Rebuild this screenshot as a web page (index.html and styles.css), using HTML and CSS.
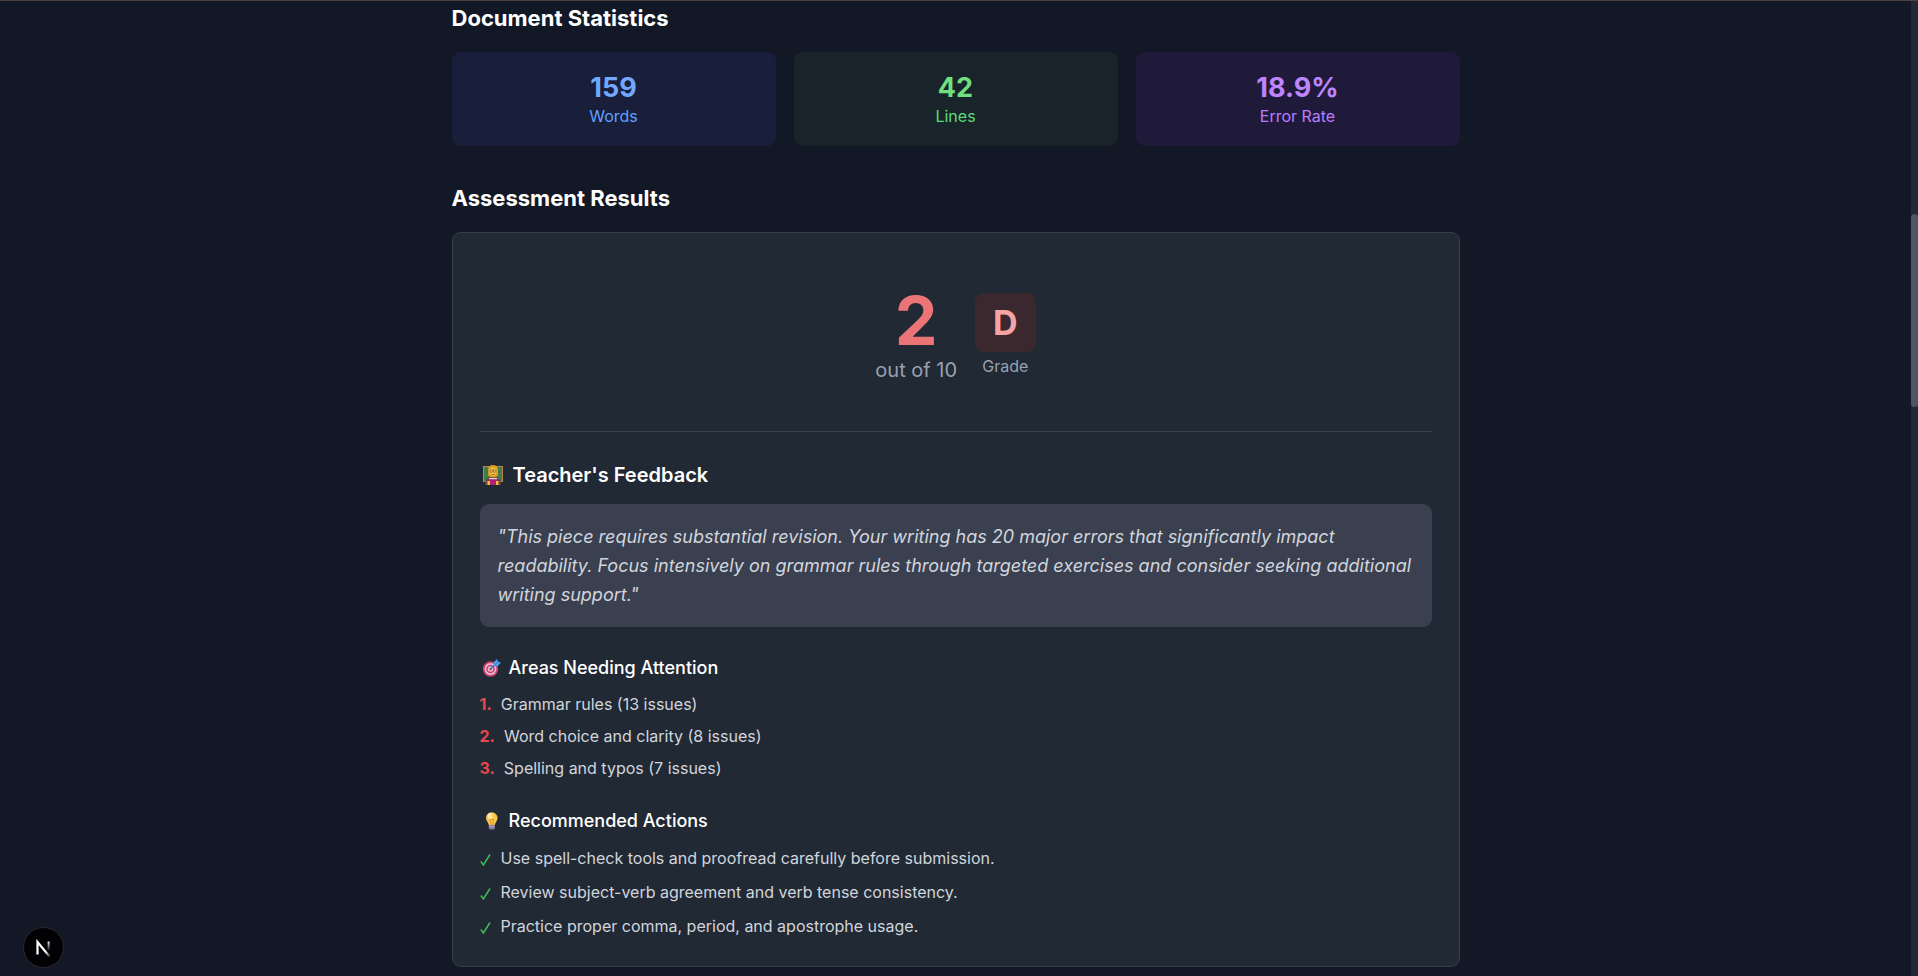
FILE: index.html
```html
<!DOCTYPE html>
<html lang="en">
<head>
<meta charset="utf-8">
<meta name="viewport" content="width=device-width, initial-scale=1">
<title>Assessment Results</title>
<link rel="stylesheet" href="styles.css">
</head>
<body>
<div class="page">
  <main class="content">
    <section class="section">
      <h2 class="section-title">Document Statistics</h2>
      <div class="stats">
        <div class="stat stat-blue"><div class="stat-value">159</div><div class="stat-label">Words</div></div>
        <div class="stat stat-green"><div class="stat-value">42</div><div class="stat-label">Lines</div></div>
        <div class="stat stat-purple"><div class="stat-value">18.9%</div><div class="stat-label">Error Rate</div></div>
      </div>
    </section>

    <section class="section">
      <h2 class="section-title">Assessment Results</h2>
      <div class="card">
        <div class="score-row">
          <div class="score">
            <div class="score-value">2</div>
            <div class="score-total">out of 10</div>
          </div>
          <div class="grade">
            <div class="grade-badge">D</div>
            <div class="grade-label">Grade</div>
          </div>
        </div>

        <div class="feedback">
          <h3 class="feedback-title">
            <svg class="emoji emoji-large" viewBox="0 0 26 24" aria-hidden="true">
              <rect x="3" y="3" width="20" height="16" fill="#b98555"/>
              <rect x="4" y="4" width="18" height="14" fill="#3f7d4c"/>
              <path d="M5 22q0-7 5-8h6q5 1 5 8z" fill="#70404a"/>
              <path d="M8 12.500V7q0-5 5-5t5 5v5.500q-2 2-5 2t-5-2z" fill="#d99a22"/>
              <ellipse cx="13" cy="8.500" rx="3.600" ry="4.200" fill="#f2bd3a"/>
              <circle cx="11.400" cy="8" r="1.400" fill="none" stroke="#8f6c48" stroke-width=".8"/>
              <circle cx="14.600" cy="8" r="1.400" fill="none" stroke="#8f6c48" stroke-width=".8"/>
              <path d="M11.500 11.200q1.500 1 3 0" fill="none" stroke="#a5622a" stroke-width=".8"/>
              <rect x="9" y="15" width="8" height="1.500" fill="#dfd3dc"/>
              <rect x="9" y="16.500" width="8" height="5" fill="#b51d72"/>
              <path d="M7.500 18H10v4H7.500zM16 18h2.500v4H16z" fill="#f4c03a"/>
            </svg>
            Teacher's Feedback
          </h3>
          <blockquote class="quote">"This piece requires substantial revision. Your writing has 20 major errors that significantly impact readability. Focus intensively on grammar rules through targeted exercises and consider seeking additional writing support."</blockquote>
        </div>

        <div class="group">
          <h4 class="group-title">
            <svg class="emoji" viewBox="0 0 23 24" aria-hidden="true">
              <circle cx="10.500" cy="13" r="7.700" fill="#d33b68"/>
              <circle cx="10.500" cy="13" r="5.900" fill="#e3c3d6"/>
              <circle cx="10.500" cy="13" r="4.300" fill="#d33b68"/>
              <circle cx="10.500" cy="13" r="2.700" fill="#e3c3d6"/>
              <circle cx="10.500" cy="13" r="1.300" fill="#d33b68"/>
              <path d="M10.500 13l5-5" stroke="#2f71b8" stroke-width="1.200"/>
              <path d="M13.500 6.500l3.500-3.500 1 2.700 3 .8-3.500 3.700-3.200.3z" fill="#4da0ed"/>
              <path d="M14.500 9.500l4-4" stroke="#2f78c5" stroke-width=".8"/>
            </svg>
            Areas Needing Attention
          </h4>
          <ol class="list">
            <li class="item"><span class="number">1.</span>Grammar rules (13 issues)</li>
            <li class="item"><span class="number">2.</span>Word choice and clarity (8 issues)</li>
            <li class="item"><span class="number">3.</span>Spelling and typos (7 issues)</li>
          </ol>
        </div>

        <div class="group">
          <h4 class="group-title">
            <svg class="emoji" viewBox="0 0 23 24" aria-hidden="true">
              <path d="M6 9a5.800 5.800 0 0 1 11.600 0c0 3-2.400 4.200-2.800 7H8.800c-.4-2.800-2.800-4-2.800-7z" fill="#f7c54b"/>
              <ellipse cx="10" cy="7" rx="2.500" ry="3" fill="#ffe6a0"/>
              <path d="M10 10l1 6M13.500 10l-1 6M10 10.500h3.500" fill="none" stroke="#d98a25" stroke-width=".7"/>
              <path d="M8.800 16h6v3q0 1.500-3 1.500t-3-1.500z" fill="#8c7c9f"/>
              <path d="M8.800 17.500h6" stroke="#c0b2cf" stroke-width=".7"/>
            </svg>
            Recommended Actions
          </h4>
          <ul class="list">
            <li class="item action"><svg class="check" viewBox="0 0 11 14" aria-hidden="true"><path d="M.800 8.500 3.400 12 10 1.500"/></svg>Use spell-check tools and proofread carefully before submission.</li>
            <li class="item action"><svg class="check" viewBox="0 0 11 14" aria-hidden="true"><path d="M.800 8.500 3.400 12 10 1.500"/></svg>Review subject-verb agreement and verb tense consistency.</li>
            <li class="item action"><svg class="check" viewBox="0 0 11 14" aria-hidden="true"><path d="M.800 8.500 3.400 12 10 1.500"/></svg>Practice proper comma, period, and apostrophe usage.</li>
          </ul>
        </div>
      </div>
    </section>
  </main>
  <div class="scroll-track" aria-hidden="true"><div class="scroll-thumb"></div></div>
</div>

<button class="dev-badge" type="button" aria-label="Open Next.js Dev Tools">
  <svg class="dev-logo" viewBox="0 0 16 18" fill="none" aria-hidden="true">
    <defs>
      <linearGradient id="fade-diagonal" x1="8" y1="9" x2="14" y2="17" gradientUnits="userSpaceOnUse"><stop offset=".4" stop-color="#fff"/><stop offset="1" stop-color="#fff" stop-opacity=".2"/></linearGradient>
      <linearGradient id="fade-stem" x1="0" y1="2" x2="0" y2="12" gradientUnits="userSpaceOnUse"><stop stop-color="#fff"/><stop offset="1" stop-color="#fff" stop-opacity="0"/></linearGradient>
    </defs>
    <path d="M1.500 15.500V3L13.500 17.500" stroke="url(#fade-diagonal)" stroke-width="2.200"/>
    <path d="M12.600 2.500v10" stroke="url(#fade-stem)" stroke-width="2"/>
  </svg>
</button>
</body>
</html>
```
FILE: styles.css
```css
*,
*::before,
*::after {
  box-sizing: border-box;
}

body,
h2,
h3,
h4,
ol,
ul,
blockquote {
  margin: 0;
  padding: 0;
}

body {
  background: #121826;
  color: #d1d5dc;
  font-family: Inter, "Liberation Sans", sans-serif;
  font-size: 18px;
}

.page {
  display: flex;
  min-height: 100vh;
  border-top: 1px solid #4b4245;
}

.content {
  flex: 1;
  max-width: 1008px;
  margin: 0 auto;
  padding: 1px 0 8px;
  display: flex;
  flex-direction: column;
  gap: 36px;
}

.section-title {
  margin-bottom: 18px;
  color: #fff;
  font-size: 22px;
  font-weight: 700;
  line-height: 32px;
}

.stats {
  display: grid;
  grid-template-columns: repeat(3, 1fr);
  gap: 18px;
}

.stat {
  padding: 18px 18px 20px;
  border-radius: 9px;
  text-align: center;
}

.stat-value {
  font-size: 27px;
  font-weight: 700;
  line-height: 36px;
}

.stat-label {
  font-size: 16px;
  line-height: 20px;
}

.stat-blue { background: #191f3a; color: #60a0ff; }
.stat-green { background: #18242a; color: #5bdc76; }
.stat-purple { background: #201a3a; color: #b97dff; }
.stat-blue .stat-value { color: #72a8ff; }
.stat-green .stat-value { color: #70df80; }
.stat-purple .stat-value { color: #bd85ff; }

.card {
  padding: 27px;
  border: 1px solid #363f4c;
  border-radius: 9px;
  background: #212935;
}

.score-row {
  display: flex;
  align-items: center;
  justify-content: center;
  gap: 18px;
  padding: 26px 0 27px;
  margin-bottom: 18px;
  text-align: center;
}

.score-value {
  color: #eb7477;
  font-size: 68px;
  font-weight: 700;
  line-height: 68px;
}

.score-total {
  color: #98a1af;
  font-size: 20px;
  line-height: 32px;
}

.grade {
  display: flex;
  flex-direction: column;
  align-items: center;
  gap: 3px;
  padding-bottom: 2px;
}

.grade-badge {
  padding: 9px 18px;
  border-radius: 9px;
  background: #3b282f;
  color: #f5a4a6;
  font-size: 34px;
  font-weight: 700;
  line-height: 41px;
}

.grade-label {
  color: #98a1af;
  font-size: 16px;
  line-height: 22px;
}

.feedback {
  padding-top: 27px;
  border-top: 1px solid #3a4250;
}

.feedback-title,
.group-title {
  display: flex;
  align-items: center;
  color: #fff;
  font-weight: 600;
}

.feedback-title {
  gap: 7px;
  margin-bottom: 13px;
  font-size: 20px;
  line-height: 32px;
}

.group {
  margin-top: 27px;
}

.group-title {
  gap: 6px;
  margin-bottom: 12px;
  font-size: 18px;
  font-weight: 500;
  line-height: 27px;
}

.emoji {
  flex: none;
  width: 23px;
  height: 24px;
}

.emoji-large {
  width: 26px;
}

.quote {
  padding: 18px;
  border-radius: 9px;
  background: #3a404f;
  font-style: italic;
  line-height: 29px;
}

.list {
  display: flex;
  flex-direction: column;
  gap: 9px;
  list-style: none;
}

.item {
  display: flex;
  gap: 9px;
  font-size: 16px;
  line-height: 23px;
}

.number {
  color: #e5484d;
  font-weight: 700;
}

.action {
  gap: 10px;
  line-height: 25px;
}

.check {
  width: 11px;
  height: 14px;
  margin-top: 7px;
  fill: none;
  stroke: #3fbd55;
  stroke-width: 1.5;
}

.scroll-track {
  width: 7px;
  background: #202935;
}

.scroll-thumb {
  position: sticky;
  top: 214px;
  height: 193px;
  border-radius: 4px;
  background: #4b5563;
}

.dev-badge {
  position: fixed;
  left: 23px;
  bottom: 8px;
  display: grid;
  place-items: center;
  width: 41px;
  height: 41px;
  padding: 0;
  border: 1px solid #2a2a2c;
  border-radius: 50%;
  background: #020204;
}

.dev-logo {
  width: 16px;
  height: 18px;
}
```
